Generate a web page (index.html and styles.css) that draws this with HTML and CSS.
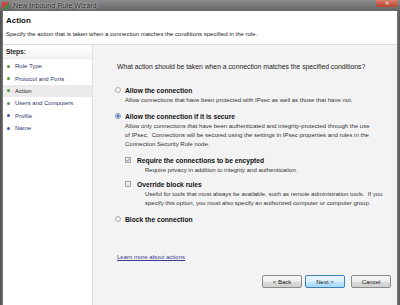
FILE: index.html
```html
<!DOCTYPE html>
<html>
<head>
<meta charset="utf-8">
<link rel="stylesheet" href="styles.css">
</head>
<body>
<div class="window">
  <div class="titlebar">
    <span class="appicon"></span>
    <span class="title">New Inbound Rule Wizard</span>
    <span class="close">&#x2715;</span>
  </div>
  <div class="frame">
    <div class="header">
      <div class="h-title">Action</div>
      <div class="h-sub">Specify the action that is taken when a connection matches the conditions specified in the rule.</div>
    </div>
    <div class="main">
      <div class="steps">
        <div class="steps-head">Steps:</div>
        <ul class="steplist">
          <li class="done"><span class="dot"></span>Rule Type</li>
          <li class="done"><span class="dot"></span>Protocol and Ports</li>
          <li class="done current"><span class="dot"></span>Action</li>
          <li class="done"><span class="dot"></span>Users and Computers</li>
          <li class="todo"><span class="dot"></span>Profile</li>
          <li class="todo"><span class="dot"></span>Name</li>
        </ul>
      </div>
      <div class="content">
        <div class="question">What action should be taken when a connection matches the specified conditions?</div>
        <div class="opt opt-first">
          <div class="opt-row"><span class="radio"></span><span class="opt-label">Allow the connection</span></div>
          <div class="desc">Allow connections that have been protected with IPsec as well as those that have not.</div>
        </div>
        <div class="opt">
          <div class="opt-row"><span class="radio on"></span><span class="opt-label">Allow the connection if it is secure</span></div>
          <div class="desc">Allow only connections that have been authenticated and integrity-protected through the use<br>of IPsec.&nbsp; Connections will be secured using the settings in IPsec properties and rules in the<br>Connection Security Rule node.</div>
          <div class="sub sub-first">
            <div class="opt-row"><span class="check on"><svg viewBox="0 0 8 8" width="6" height="6"><path d="M1.2 4.2 L3.2 6.2 L6.8 1.6" fill="none" stroke="#3b4f7a" stroke-width="1.4"/></svg></span><span class="opt-label">Require the connections to be encypted</span></div>
            <div class="desc sub-desc">Require privacy in addition to integrity and authentication.</div>
          </div>
          <div class="sub">
            <div class="opt-row"><span class="check"></span><span class="opt-label">Override block rules</span></div>
            <div class="desc sub-desc">Useful for tools that must always be available, such as remote administration tools.&nbsp; If you<br>specify this option, you must also specify an authorized computer or computer group.</div>
          </div>
        </div>
        <div class="opt opt-block">
          <div class="opt-row"><span class="radio"></span><span class="opt-label">Block the connection</span></div>
        </div>
        <div class="spacer"></div>
        <a class="learn" href="#">Learn more about actions</a>
        <div class="buttons">
          <button class="btn">&lt; Back</button>
          <button class="btn default">Next &gt;</button>
          <button class="btn cancel">Cancel</button>
        </div>
      </div>
    </div>
  </div>
</div>
</body>
</html>
```
FILE: styles.css
```css
* { box-sizing: border-box; }
html, body { margin: 0; padding: 0; }
body {
  width: 400px;
  height: 305px;
  overflow: hidden;
  font-family: "Liberation Sans", Arial, sans-serif;
  font-size: 6px;
  color: #222;
  background: #6a6a6a;
}
.window {
  width: 400px;
  height: 305px;
  display: flex;
  flex-direction: column;
  background: linear-gradient(90deg, #4a4a4a 0, #7a7a7a 3px, #7a7a7a 397px, #555 400px);
}
.titlebar {
  height: 11px;
  display: flex;
  align-items: center;
  padding-left: 2px;
  background: linear-gradient(180deg, #8c8c8c 0%, #747474 60%, #666 100%);
  position: relative;
}
.appicon {
  width: 7px;
  height: 7px;
  border-radius: 1px;
  background: linear-gradient(135deg, #c44 0%, #c44 50%, #3a8a4a 50%, #3a8a4a 100%);
  margin-right: 4px;
}
.title {
  font-size: 7px;
  color: #1a1a1a;
  text-shadow: 0 0 3px #d8d8d8, 0 0 2px #e0e0e0;
  letter-spacing: 0.1px;
}
.close {
  position: absolute;
  right: 2px;
  top: 0;
  width: 22px;
  height: 7px;
  background: linear-gradient(180deg, #d9826e, #b8412a);
  border-radius: 0 0 3px 3px;
  color: #fff;
  font-size: 5px;
  line-height: 7px;
  text-align: center;
}
.frame {
  flex: 1;
  display: flex;
  flex-direction: column;
  margin: 0 3px 0 3px;
  background: #fff;
  min-height: 0;
}
.header {
  height: 34px;
  background: #fff;
  padding: 5px 0 0 3px;
  border-bottom: 1px solid #dcdcdc;
}
.h-title {
  font-weight: bold;
  font-size: 8px;
  color: #111;
  line-height: 10px;
}
.h-sub {
  margin-top: 4px;
  font-size: 6px;
  line-height: 8px;
  color: #222;
}
.main {
  flex: 1;
  display: flex;
  min-height: 0;
}
.steps {
  width: 90px;
  background: #fff;
  border-right: 1px solid #e2e2e2;
}
.steps-head {
  font-weight: bold;
  font-size: 6.5px;
  height: 14px;
  line-height: 14px;
  padding-left: 3px;
  background: linear-gradient(180deg, #ffffff, #f3f3f3);
  border-bottom: 1px solid #e8e8e8;
}
.steplist {
  list-style: none;
  margin: 1px 0 0 0;
  padding: 0;
}
.steplist li {
  display: flex;
  align-items: center;
  height: 12.4px;
  padding-left: 4px;
  color: #2b356e;
  font-size: 6px;
}
.steplist li.current {
  background: #ebebeb;
  color: #222;
}
.dot {
  width: 3px;
  height: 3px;
  border-radius: 50%;
  margin-right: 5px;
}
.done .dot { background: #4a9a3a; }
.todo .dot { background: #3a5aa8; }
.content {
  flex: 1;
  background: #f3f3f3;
  padding: 18px 0 0 24px;
  display: flex;
  flex-direction: column;
}
.question {
  font-size: 6.8px;
  line-height: 8px;
  color: #222;
}
.opt {
  margin-top: 7px;
}
.opt-first {
  margin-top: 15px;
}
.opt-block {
  margin-top: 7px;
}
.opt-row {
  display: flex;
  align-items: center;
  height: 8px;
  margin-left: -2px;
}
.opt-label {
  font-weight: bold;
  font-size: 6.7px;
  color: #111;
}
.radio {
  width: 6px;
  height: 6px;
  border-radius: 50%;
  border: 1px solid #b0b0b0;
  background: radial-gradient(circle, #fff 0, #e6e6e6 100%);
  margin-right: 4px;
  flex: none;
}
.radio.on {
  background: radial-gradient(circle, #4a74b8 0, #4a74b8 1.2px, #dfe6f0 1.8px);
  border-color: #8a9ab8;
}
.check {
  width: 6px;
  height: 6px;
  border: 1px solid #a8a8a8;
  background: linear-gradient(180deg, #f0f0f0, #dcdcdc);
  margin-right: 6px;
  display: flex;
  align-items: center;
  justify-content: center;
  flex: none;
}
.desc {
  margin-left: 8px;
  margin-top: 2px;
  line-height: 9px;
  color: #333;
  white-space: nowrap;
}
.sub {
  margin-left: 8px;
  margin-top: 5px;
}
.sub-first { margin-top: 7px; }
.sub .opt-row { margin-left: 0; }
.sub-desc {
  margin-left: 20px;
}
.spacer { flex: 1; }
.learn {
  color: #3a3a8a;
  text-decoration: underline;
  font-size: 6px;
  align-self: flex-start;
  margin-bottom: 15px;
}
.buttons {
  display: flex;
  justify-content: flex-end;
  gap: 3px;
  padding-right: 6px;
  margin-bottom: 17px;
}
.btn {
  width: 40px;
  height: 13px;
  padding: 0;
  font-family: "Liberation Sans", Arial, sans-serif;
  font-size: 6px;
  color: #222;
  border: 1px solid #8a8a8a;
  border-radius: 2px;
  background: linear-gradient(180deg, #f6f6f6 0%, #ececec 50%, #dcdcdc 51%, #cfcfcf 100%);
}
.btn.default {
  border-color: #3c7fb1;
  background: linear-gradient(180deg, #eaf6fd 0%, #d9f0fc 50%, #bee6fd 51%, #a7d9f5 100%);
}
.btn.cancel { margin-left: 3px; }
```
